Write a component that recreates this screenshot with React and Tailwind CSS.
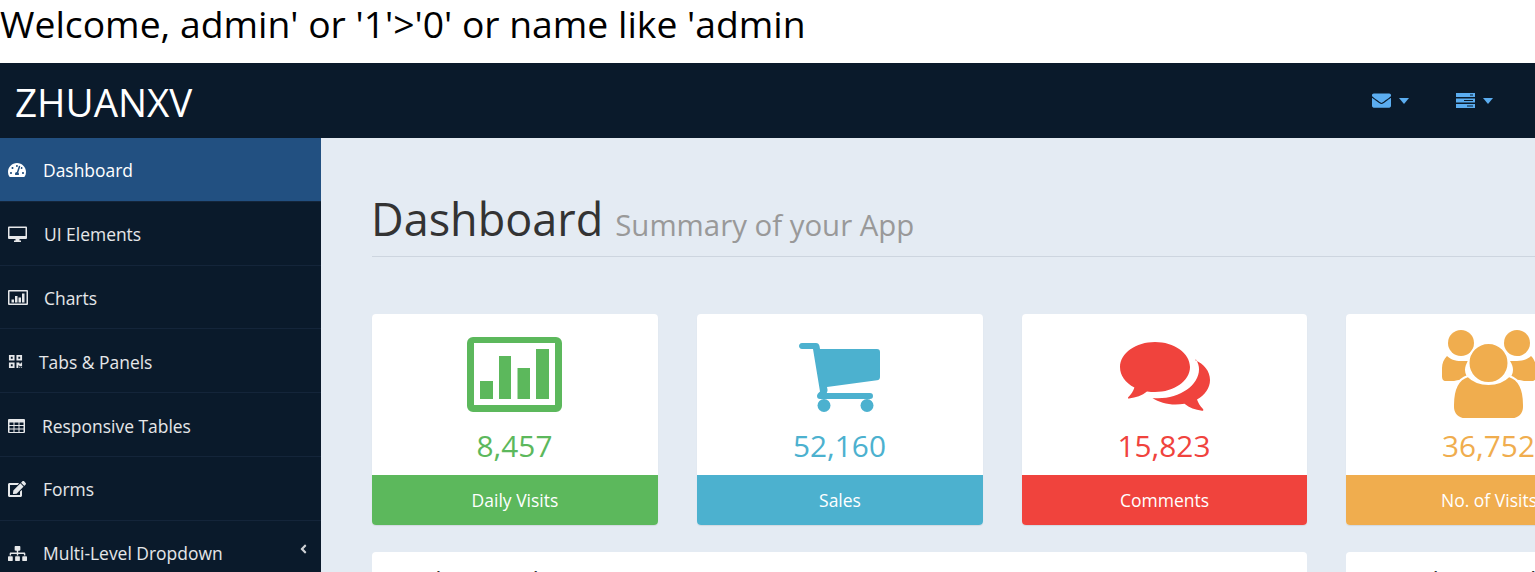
import { FaTachometerAlt, FaQrcode, FaEdit, FaSitemap, FaEnvelope, FaAngleLeft } from 'react-icons/fa'

const menu = [
  { label: 'Dashboard', icon: FaTachometerAlt, size: 'w-[18px] h-[18px]', gap: 'ml-[17px]', active: true },
  { label: 'UI Elements', icon: DesktopIcon, size: 'w-[19px] h-[17px]', gap: 'ml-[17px]' },
  { label: 'Charts', icon: ChartIcon, size: 'w-[20px] h-[15px]', gap: 'ml-[16px]' },
  { label: 'Tabs & Panels', icon: FaQrcode, size: 'w-[15px] h-[15px]', gap: 'ml-[16px]' },
  { label: 'Responsive Tables', icon: TableIcon, size: 'w-[17px] h-[14px]', gap: 'ml-[17px]' },
  { label: 'Forms', icon: FaEdit, size: 'w-[18px] h-[18px]', gap: 'ml-[17px]' },
  { label: 'Multi-Level Dropdown', icon: FaSitemap, size: 'w-[19px] h-[19px]', gap: 'ml-[16px]', arrow: true },
]

const stats = [
  { value: '8,457', label: 'Daily Visits', text: 'text-[#5cb85c]', bg: 'bg-[#5cb85c]', icon: <BigChart />, w: 'w-[286px]' },
  { value: '52,160', label: 'Sales', text: 'text-[#4cb1cf]', bg: 'bg-[#4cb1cf]', icon: <Cart />, w: 'w-[286px]' },
  { value: '15,823', label: 'Comments', text: 'text-[#f0433d]', bg: 'bg-[#f0433d]', icon: <Comments />, w: 'w-[285px]' },
  { value: '36,752', label: 'No. of Visits', text: 'text-[#f0ad4e]', bg: 'bg-[#f0ad4e]', icon: <Users />, w: 'w-[286px]' },
]

function DesktopIcon({ className }) {
  return (
    <svg viewBox="0 0 19 16" className={className} fill="currentColor">
      <path fillRule="evenodd" d="M1 0h17a1 1 0 0 1 1 1v10.500a1 1 0 0 1-1 1H1a1 1 0 0 1-1-1V1a1 1 0 0 1 1-1zm.5 1.500v8h16v-8z" />
      <path d="M7.500 12.500h4v1.500h1.500v1.500H6V14h1.500z" />
    </svg>
  )
}

function ChartIcon({ className }) {
  return (
    <svg viewBox="0 0 20 15" className={className} fill="currentColor">
      <path fillRule="evenodd" d="M1 0h18a1 1 0 0 1 1 1v13a1 1 0 0 1-1 1H1a1 1 0 0 1-1-1V1a1 1 0 0 1 1-1zm.5 1.500v12h17v-12z" />
      <path d="M3.500 9.500h2.500v3H3.500zM7 6h2.500v6.500H7zM10.500 7.500H13v5h-2.500zM14 3.500h2.500v9H14z" />
    </svg>
  )
}

function TableIcon({ className }) {
  return (
    <svg viewBox="0 0 17 14" className={className} fill="currentColor">
      <path fillRule="evenodd" d="M1 0h15a1 1 0 0 1 1 1v12a1 1 0 0 1-1 1H1a1 1 0 0 1-1-1V1a1 1 0 0 1 1-1zm.5 3.500v2.500h4V3.500zm5 0v2.500h4V3.500zm5 0v2.500h4V3.500zm-10 3.500v2.500h4V7zm5 0v2.500h4V7zm5 0v2.500h4V7zm-10 3.500V13h4v-2.500zm5 0V13h4v-2.500zm5 0V13h4v-2.500z" />
    </svg>
  )
}

function BigChart() {
  return (
    <svg viewBox="0 0 95 75" className="-ml-[2px] w-[95px] h-[75px] text-[#5cb85c]" fill="currentColor">
      <path fillRule="evenodd" d="M6 0h83a6 6 0 0 1 6 6v63a6 6 0 0 1-6 6H6a6 6 0 0 1-6-6V6a6 6 0 0 1 6-6zm1 6v62h81V6z" />
      <path d="M13 44h13v18H13zM32 19h12v43H32zM50.500 31H63v31H50.500zM69 12h13v50H69z" />
    </svg>
  )
}

function Cart() {
  return (
    <svg viewBox="0 0 81 69" className="-ml-[2px] w-[81px] h-[69px] text-[#4cb1cf]" fill="currentColor">
      <path d="M3 0h14c2 0 3 1 3.500 3l.5 3h57c2 0 3 1 3 3v25c0 2-1 3-3 3.300L28 44l.5 2.500c.200 1.300-.3 2.500-.8 3.500H71c2 0 3 1.200 3 3s-1 3-3 3H21c-2 0-3-1.200-3-3 0-1.500 1-3 3-4.500L14 6H3C1 6 0 4.500 0 3s1-3 3-3z" />
      <circle cx="25" cy="62.500" r="6.500" />
      <circle cx="68" cy="62.500" r="6.500" />
    </svg>
  )
}

function Comments() {
  return (
    <svg viewBox="0 0 90 70" className="w-[90px] h-[70px] text-[#f0433d]" fill="currentColor">
      <path d="M35 0c19 0 35 11 35 25 0 14-16 25-35 25-3 0-5 0-8-.500-5 4-11 6-18 7-1 .100-1.500-.500-.8-1.300 3-2.700 5-5.700 6.200-9.700C5.500 41 0 33.500 0 25 0 11 16 0 35 0z" />
      <path d="M75 18c9 4 15 11 15 20 0 8-5 15-13 19.500 1.300 3.500 3 6.500 6 9.500.8.900.3 2-1 1.800-7-1-12.500-3-17.500-7-3 .5-6 .7-9 .7-9 0-17-2.500-23-6.500 2 .2 3.500.3 5.500.3 22 0 41-13 41-29 0-3-.6-6-3-9.800z" />
    </svg>
  )
}

function Users() {
  return (
    <svg viewBox="0 0 94 88" className="w-[94px] h-[88px] -mb-[6px] text-[#f0ad4e]" fill="currentColor">
      <circle cx="19" cy="13" r="13" />
      <circle cx="75" cy="13" r="13" />
      <path d="M5 26c3 3 8 5 14 5h7c-2 3-3 6-3 9 0 4 2 7 4 9-6 0-11 1-15 2H4c-3 0-4-2-4-5V38c0-5 2-9 5-12z" />
      <path d="M89 26c-3 3-8 5-14 5h-7c2 3 3 6 3 9 0 4-2 7-4 9 6 0 11 1 15 2h8c3 0 4-2 4-5V38c0-5-2-9-5-12z" />
      <circle cx="46.500" cy="33" r="20" stroke="white" strokeWidth="2" />
      <path stroke="white" strokeWidth="2" d="M26 46c5 5 12 8 20.500 8S62 51 67 46c10 3 15 12 15 29v2c0 7-5 12-12 12H23c-7 0-12-5-12-12v-2c0-17 5-26 15-29z" />
    </svg>
  )
}

function StatCard({ stat }) {
  return (
    <div className={`${stat.w} shrink-0 h-[211px] bg-white rounded flex flex-col shadow-[0_1px_1px_rgba(0,0,0,0.08)] overflow-hidden`}>
      <div className={`flex-1 flex flex-col items-center ${stat.text}`}>
        <div className="h-[98px] flex items-end">{stat.icon}</div>
        <div className="mt-[14px] -ml-[1px] text-[29.800px] leading-[40px]">{stat.value}</div>
      </div>
      <div className={`${stat.bg} h-[50px] flex items-center justify-center text-white text-[17.500px]`}>{stat.label}</div>
    </div>
  )
}

export default function App() {
  return (
    <div className="w-[1535px] h-[572px] overflow-hidden bg-white font-['Open_Sans',sans-serif]">
      <div className="h-[63px] text-[37.300px] leading-[47px] text-black whitespace-nowrap">Welcome, admin' or '1'&gt;'0' or name like 'admin</div>

      <nav className="h-[75px] bg-[#0a1a2b] flex items-center justify-between pl-[15px] pr-[42px]">
        <div className="pt-[4px] text-[38.600px] font-medium text-white">ZHUANXV</div>
        <div className="flex items-center text-[#5badf0]">
          <FaEnvelope className="-ml-[1px] w-[19px] h-[19px]" />
          <span className="ml-[8px] w-0 h-0 border-x-[5px] border-x-transparent border-t-[6px] border-t-[#5badf0]" />
          <svg viewBox="0 0 19 15" className="ml-[47px] w-[19px] h-[15px]" fill="currentColor">
            <path d="M0 0h19v4H0zM0 5.500h19v4H0zM0 11h19v4H0z" />
            <path fill="#0a1a2b" d="M14 1.500h3v1h-3zM8 7h9v1H8zM11 12.500h6v1h-6z" />
          </svg>
          <span className="ml-[8px] w-0 h-0 border-x-[5px] border-x-transparent border-t-[6px] border-t-[#5badf0]" />
        </div>
      </nav>

      <div className="flex h-[434px]">
        <aside className="w-[321px] shrink-0 bg-[#0a1a2b]">
          {menu.map(item => (
            <div key={item.label} className={`h-[63.800px] flex items-center pt-[2px] pl-[8px] pr-[12px] text-[17.450px] border-b border-[#14253a] ${item.active ? 'bg-[#225081] text-white' : 'text-white/90'}`}>
              <item.icon className={item.size} />
              <span className={item.gap}>{item.label}</span>
              {item.arrow && <FaAngleLeft className="ml-auto mb-[8px] w-[11px] h-[14px] text-white/80" />}
            </div>
          ))}
        </aside>

        <main className="flex-1 min-w-0 bg-[#e4ebf3] pl-[51px]">
          <div className="w-[1300px] h-[119px] border-b border-[#cdd5df] flex items-end pb-[7px] whitespace-nowrap">
            <h1 className="-ml-[1px] text-[45px] leading-[60px] text-[#333]">Dashboard</h1>
            <span className="ml-[12px] mb-[4px] text-[29.400px] leading-[40px] text-[#999]">Summary of your App</span>
          </div>
          <div className="mt-[57px] flex gap-[39px]">
            {stats.map(s => <StatCard key={s.label} stat={s} />)}
          </div>
          <div className="mt-[27px] flex gap-[39px]">
            <div className="w-[935px] shrink-0 h-[60px] bg-white rounded pl-[19px] pt-[13px] text-[17.500px] text-[#333] font-semibold">Bar Chart Example</div>
            <div className="w-[286px] shrink-0 h-[60px] bg-white rounded pl-[19px] pt-[13px] text-[17.500px] text-[#333] font-semibold">Donut Chart Example</div>
          </div>
        </main>
      </div>
    </div>
  )
}
